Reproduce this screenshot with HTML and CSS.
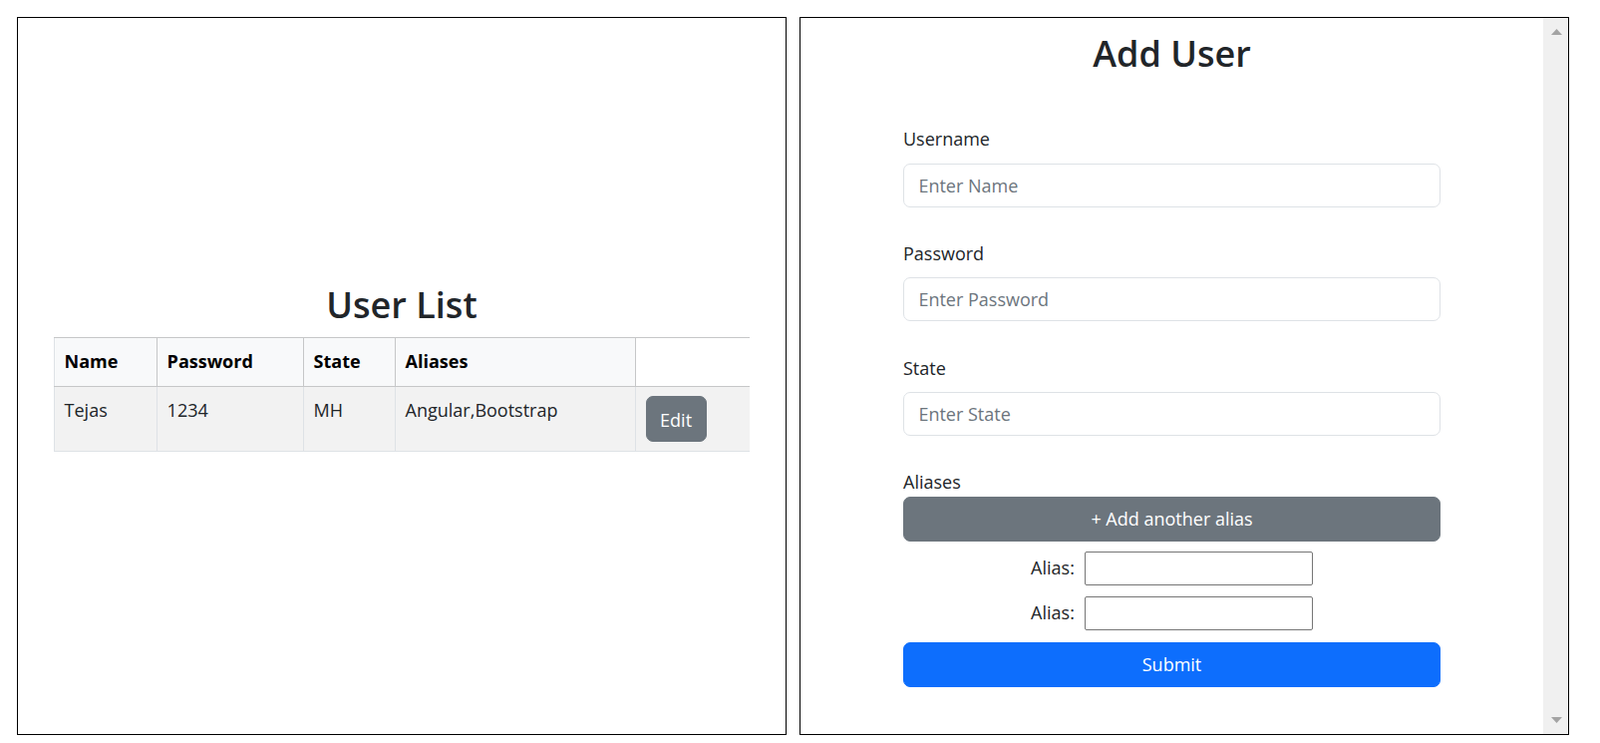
FILE: index.html
```html
<!DOCTYPE html>
<html lang="en">
<head>
<meta charset="utf-8">
<title>Users</title>
<link rel="stylesheet" href="styles.css">
</head>
<body>
<div class="page">
  <section class="panel panel-list">
    <div class="list-block">
      <h2 class="title">User List</h2>
      <div class="table-wrap">
        <table class="users">
          <colgroup>
            <col class="c-name"><col class="c-pass"><col class="c-state"><col class="c-alias"><col class="c-act">
          </colgroup>
          <thead>
            <tr><th>Name</th><th>Password</th><th>State</th><th>Aliases</th><th class="th-blank"></th></tr>
          </thead>
          <tbody>
            <tr>
              <td>Tejas</td><td>1234</td><td>MH</td><td>Angular,Bootstrap</td>
              <td><button type="button" class="btn btn-gray btn-edit">Edit</button></td>
            </tr>
          </tbody>
        </table>
      </div>
    </div>
  </section>
  <section class="panel panel-form">
    <div class="form-area">
      <h2 class="title title-form">Add User</h2>
      <form class="user-form">
        <div class="group">
          <label class="lbl">Username</label>
          <input class="field" type="text" placeholder="Enter Name">
        </div>
        <div class="group">
          <label class="lbl">Password</label>
          <input class="field" type="text" placeholder="Enter Password">
        </div>
        <div class="group">
          <label class="lbl">State</label>
          <input class="field" type="text" placeholder="Enter State">
        </div>
        <div class="aliases">
          <label class="lbl">Aliases</label>
          <button type="button" class="btn btn-gray btn-block">+ Add another alias</button>
          <div class="alias-rows">
            <div class="alias-row"><label class="alias-lbl">Alias:</label><input class="alias-input" type="text"></div>
            <div class="alias-row"><label class="alias-lbl">Alias:</label><input class="alias-input" type="text"></div>
          </div>
        </div>
        <button type="button" class="btn btn-blue btn-block">Submit</button>
      </form>
    </div>
    <div class="scrollbar">
      <svg class="arrow" width="11" height="6" viewBox="0 0 11 6"><polygon points="5.5,0 11,6 0,6" fill="#a3a3a3"/></svg>
      <svg class="arrow" width="11" height="6" viewBox="0 0 11 6"><polygon points="0,0 11,0 5.5,6" fill="#a3a3a3"/></svg>
    </div>
  </section>
</div>
</body>
</html>
```

FILE: styles.css
```css
* { box-sizing: border-box; }

html, body {
  margin: 0;
  padding: 0;
  background: #fff;
}

body {
  font-family: "Open Sans", "Noto Sans", sans-serif;
  font-size: 18px;
  line-height: 28.8px;
  color: #212529;
}

.page {
  display: flex;
  gap: 13px;
  padding: 17px 0 0 17px;
}

.panel {
  width: 772px;
  height: 720px;
  border: 1px solid #000;
  background: #fff;
}

/* left panel */
.panel-list {
  display: flex;
  flex-direction: column;
  justify-content: center;
}

.list-block {
  padding: 0 36px;
}

.title {
  margin: 0;
  font-size: 36px;
  line-height: 43.2px;
  font-weight: 600;
  text-align: center;
  color: #212529;
}

.list-block .title {
  margin-bottom: 11px;
}

.table-wrap {
  overflow: hidden;
  margin-bottom: 17px;
}

.users {
  border-collapse: collapse;
  table-layout: fixed;
  width: 730px;
}

.c-name { width: 103px; }
.c-pass { width: 147px; }
.c-state { width: 92px; }
.c-alias { width: 241px; }
.c-act { width: 147px; }

.users th {
  text-align: left;
  font-weight: 700;
  color: #000;
  background: #f8f9fa;
  border: 1px solid #c6c7c8;
  padding: 9.6px;
  height: 49px;
  vertical-align: middle;
}

.users th:first-child { border-left-color: #dee2e6; }

.users th.th-blank { background: #fff; }

.users td {
  background: #f2f2f2;
  border: 1px solid #dee2e6;
  padding: 9.6px;
  vertical-align: top;
  color: #212529;
}

.users thead tr th { border-bottom-color: #c6c7c8; }

/* buttons */
.btn {
  font-family: inherit;
  font-size: 18px;
  line-height: 28.8px;
  border: 1px solid transparent;
  border-radius: 7px;
  color: #fff;
  cursor: pointer;
  display: block;
}

.btn-gray { background: #6c757d; border-color: #6c757d; }
.btn-blue { background: #0d6efd; border-color: #0d6efd; }

.btn-edit {
  height: 45.6px;
  padding: 2px 13.5px 0;
}

.btn-block {
  width: 100%;
  height: 45px;
  padding: 0;
  text-align: center;
}

/* right panel */
.panel-form {
  display: flex;
}

.form-area {
  flex: 1;
  padding-top: 14px;
}

.title-form {
  margin-bottom: 50px;
}

.user-form {
  width: 539px;
  margin: 0 auto;
}

.group {
  margin-bottom: 32.3px;
}

.lbl {
  display: block;
}

.group .lbl {
  margin-bottom: 9.6px;
}

.field {
  display: block;
  width: 100%;
  height: 44px;
  padding: 0 14.4px;
  border: 1px solid #dee2e6;
  border-radius: 7px;
  font-family: inherit;
  font-size: 18px;
  color: #212529;
  background: #fff;
}

.field::placeholder {
  color: #6c757d;
}

.alias-rows {
  display: flex;
  flex-direction: column;
  gap: 11px;
  padding: 9.6px 0 12.7px;
}

.alias-row {
  display: flex;
  justify-content: center;
  align-items: center;
  gap: 10px;
}

.alias-input {
  width: 229px;
  height: 34px;
  border: 1px solid #767676;
  border-radius: 2px;
  background: #fff;
  font-family: inherit;
  font-size: 16px;
}

/* scrollbar */
.scrollbar {
  width: 25px;
  background: #f0f0f0;
  display: flex;
  flex-direction: column;
  justify-content: space-between;
  align-items: center;
  padding: 11px 0 11px 1px;
}

.arrow { display: block; }
```
